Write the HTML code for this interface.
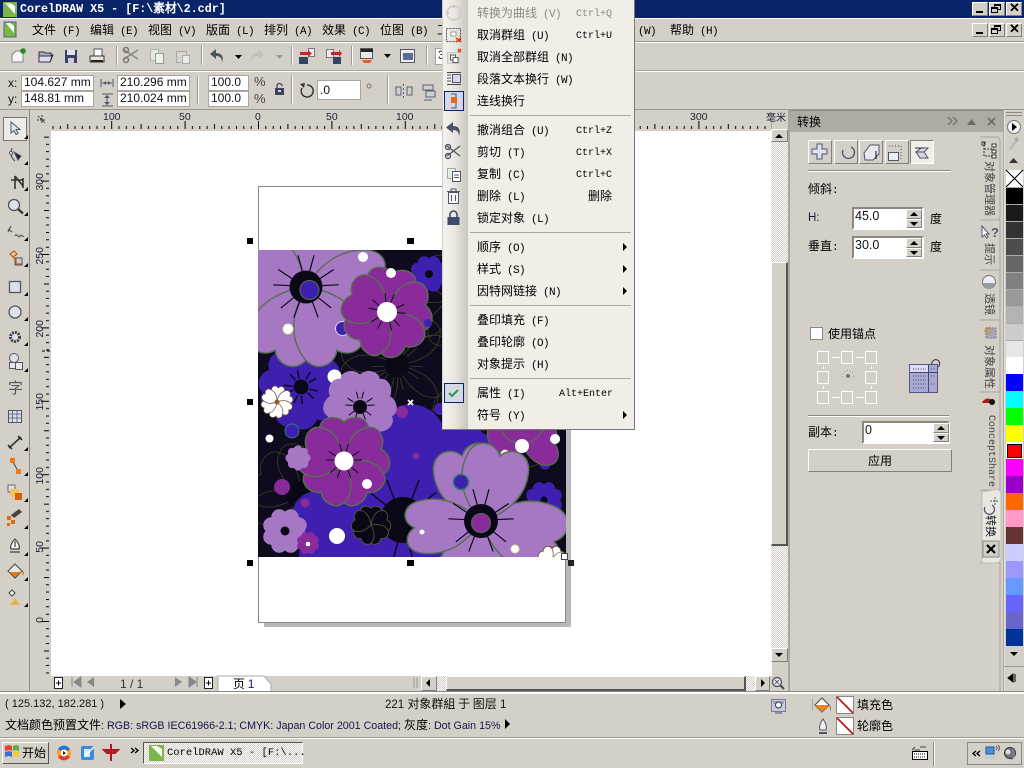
<!DOCTYPE html>
<html lang="zh"><head><meta charset="utf-8"><title>CorelDRAW X5</title>
<style>
html,body{margin:0;padding:0;width:1024px;height:768px;overflow:hidden;background:#d4d0c8}
#r{position:relative;width:1024px;height:768px;overflow:hidden;background:#d4d0c8}
.t{position:absolute;white-space:nowrap;font:12px/14px "WenQuanYi Zen Hei","Noto Sans CJK SC",sans-serif;color:#000}
.a{font:11px/14px "Liberation Mono",monospace;letter-spacing:-.6px}
.s{font:11px/14px "Liberation Sans",sans-serif;color:#111}
.n{color:#15154a;font-size:10.7px}
.b{position:absolute;background:#d4d0c8;border:1px solid;border-color:#fff #808080 #808080 #fff;box-sizing:border-box}
.d{position:absolute}
.i{position:absolute;background:#fff;border:1px solid #a8a59e;box-sizing:border-box;font:12px/13px "Liberation Sans",sans-serif;padding-left:2px;white-space:nowrap;color:#111}
.h{position:absolute;background:repeating-conic-gradient(#fff 0 25%,#cfcbc3 0 50%) 0 0/2px 2px}
.v{position:absolute;writing-mode:vertical-rl;text-orientation:sideways;white-space:nowrap;font:11px/14px "WenQuanYi Zen Hei","Noto Sans CJK SC",sans-serif;color:#444}
svg{position:absolute;left:0;top:0}
#m{position:absolute;left:442px;top:0;width:193px;height:430px;background:#f1eee8;border-right:1px solid #777;border-bottom:1px solid #777;border-left:1px solid #d4d0c8;box-sizing:border-box;overflow:hidden}
#m .c{position:absolute;left:1px;top:0;width:24px;height:430px;background:linear-gradient(90deg,#f4f2ee,#e8e6e1 45%,#c8c5bd)}
#m .t{left:34px}
#m .k{position:absolute;font:10px/14px "Liberation Mono",monospace;color:#000;left:133px;margin-top:2px}
#m .l{position:absolute;left:27px;width:161px;height:1px;background:#aaa8a2}
#m .r{position:absolute;left:180px;width:0;height:0;border-left:4px solid #000;border-top:4px solid transparent;border-bottom:4px solid transparent}
#m .g{color:#8b8984}
</style></head><body><div id="r">

<div class="d" style="left:0;top:0;width:1024px;height:18px;background:#0a246a"></div>
<div class="d" style="left:0;top:18px;width:1024px;height:1px;background:#fff"></div>
<div class="d" style="left:0;top:41px;width:1024px;height:1px;background:#9b9891"></div>
<div class="d" style="left:0;top:42px;width:1024px;height:1px;background:#fff"></div>
<div class="d" style="left:0;top:70px;width:1024px;height:1px;background:#aaa7a0"></div>
<div class="d" style="left:0;top:71px;width:1024px;height:1px;background:#fff"></div>
<div class="d" style="left:0;top:109px;width:1024px;height:1px;background:#9b9891"></div>
<div class="d" style="left:51px;top:131px;width:721px;height:545px;background:#fff"></div>
<div class="d" style="left:29px;top:110px;width:1px;height:582px;background:#888"></div>
<div class="d" style="left:3px;top:117px;width:24px;height:24px;box-sizing:border-box;border:1px solid #777;background:#eeece6"></div>

<div class="d" style="left:790px;top:110px;width:214px;height:22px;background:#aeaba4;border-top:1px solid #8d8a84;box-sizing:border-box"></div>
<div class="d" style="left:788px;top:110px;width:2px;height:582px;background:#aaa7a0"></div>
<div class="d" style="left:1003px;top:110px;width:2px;height:582px;background:linear-gradient(90deg,#8f8c85,#fff)"></div>

<div class="b" style="left:2px;top:742px;width:47px;height:22px;border-color:#fff #555 #555 #fff"></div>
<div class="b" style="left:143px;top:742px;width:160px;height:22px;background:repeating-conic-gradient(#fff 0 25%,#d4d0c8 0 50%) 0 0/2px 2px;border-color:#555 #fff #fff #555"></div>

<svg width="1024" height="768" viewBox="0 0 1024 768">
<defs>
<pattern id="rt" x="258" y="110" width="73.4" height="21" patternUnits="userSpaceOnUse">
<path d="M0.5,11V19M7.8,16V19M15.2,16V19M22.5,16V19M29.9,14V19M37.2,16V19M44.5,16V19M51.9,16V19M59.2,16V19M66.6,16V19" stroke="#000"/></pattern>
<pattern id="rl" x="30" y="621" width="21" height="73.4" patternUnits="userSpaceOnUse">
<path d="M11,.5H19M16,7.8H19M16,15.2H19M16,22.5H19M14,29.9H19M16,37.2H19M16,44.5H19M16,51.9H19M16,59.2H19M16,66.6H19" stroke="#000"/></pattern>
<path id="p" vector-effect="non-scaling-stroke" d="M0,0C-.3,-.15 -.64,-.42 -.55,-.78C-.5,-1.02 -.15,-1.05 0,-.88C.15,-1.05 .5,-1.02 .55,-.78C.64,-.42 .3,-.15 0,0Z"/>
<g id="f5"><use href="#p"/><use href="#p" transform="rotate(72)"/><use href="#p" transform="rotate(144)"/><use href="#p" transform="rotate(216)"/><use href="#p" transform="rotate(288)"/></g>
<g id="f8"><use href="#p"/><use href="#p" transform="rotate(45)"/><use href="#p" transform="rotate(90)"/><use href="#p" transform="rotate(135)"/><use href="#p" transform="rotate(180)"/><use href="#p" transform="rotate(225)"/><use href="#p" transform="rotate(270)"/><use href="#p" transform="rotate(315)"/></g>
<path id="w1" vector-effect="non-scaling-stroke" d="M.17,-.4L.32,-.8M-.17,-.4L-.32,-.8"/>
<g id="w"><use href="#w1"/><use href="#w1" transform="rotate(72)"/><use href="#w1" transform="rotate(144)"/><use href="#w1" transform="rotate(216)"/><use href="#w1" transform="rotate(288)"/></g>
<clipPath id="ic"><rect x="258" y="250" width="308" height="307"/></clipPath>
</defs>

<!-- rulers -->
<rect x="51" y="110" width="721" height="21" fill="url(#rt)"/>
<rect x="30" y="132" width="21" height="544" fill="url(#rl)"/>
<path d="M42,351H50" stroke="#000" stroke-dasharray="3 2"/>
<path d="M38,116l7,7M42,115v9M37,120h9" stroke="#333" stroke-dasharray="2 1"/>

<!-- page -->
<rect x="264" y="192" width="307" height="435" fill="#b9b9b9"/>
<rect x="258.5" y="186.5" width="307" height="436" fill="#fff" stroke="#888"/>

<!-- artwork -->
<g clip-path="url(#ic)">
<rect x="258" y="250" width="308" height="307" fill="#0d0b1d"/>
<g fill="none" stroke="#3d4123" stroke-width=".8">
<use href="#f5" transform="translate(397,365) rotate(20) scale(55)"/>
<use href="#f5" transform="translate(300,495) rotate(10) scale(50)"/>
<use href="#f5" transform="translate(490,430) rotate(-10) scale(60)"/>
<use href="#f5" transform="translate(450,300) rotate(30) scale(45)"/>
<use href="#w" transform="translate(397,365) scale(30)"/>
</g>
<circle cx="397" cy="365" r="12" fill="#0a0816"/>
<circle cx="300" cy="495" r="14" fill="#0a0816"/>

<!-- small blue top left -->
<g fill="#3f1fb0"><use href="#f8" transform="translate(275,270) scale(17)"/><use href="#f8" transform="translate(429,274) scale(18)"/></g>
<circle cx="275" cy="270" r="3.5" fill="#0a0816"/><circle cx="429" cy="274" r="4" fill="#0a0816"/>

<!-- big blue under -->
<g fill="#3f1fb0">
<use href="#p" transform="translate(403,520) rotate(-100) scale(80,110)"/>
<use href="#p" transform="translate(403,525) rotate(-12) scale(65,105)"/>
<use href="#p" transform="translate(405,525) rotate(22) scale(105,118)"/>
<use href="#p" transform="translate(403,520) rotate(-150) scale(85,80)"/>
<use href="#p" transform="translate(403,520) rotate(170) scale(105,90)"/>
<use href="#f5" transform="translate(301,387) rotate(10) scale(41)"/>
</g>
<g stroke="#0a0816" stroke-width="1.4" fill="none"><use href="#w" transform="translate(403,520) scale(50)"/><use href="#w" transform="translate(301,387) rotate(10) scale(20)"/></g>
<circle cx="301" cy="387" r="7.5" fill="#0a0816"/>
<circle cx="403" cy="520" r="23" fill="#0a0816"/>

<!-- flower A -->
<g fill="#a678c4" stroke="#56704f" stroke-width="1.4">
<use href="#p" transform="translate(306,287) rotate(5) scale(110,85)"/>
<use href="#p" transform="translate(306,287) rotate(-75) scale(75,70)"/>
<use href="#p" transform="translate(306,287) rotate(84) scale(55,82)"/>
<use href="#p" transform="translate(306,287) rotate(206) scale(60,80)"/>
<use href="#p" transform="translate(306,287) rotate(154) scale(60,80)"/>
</g>
<g stroke="#0a0816" stroke-width="1.2"><use href="#w" transform="translate(306,287) rotate(36) scale(38)"/></g>
<circle cx="306" cy="287" r="16.5" fill="#0a0816"/>
<circle cx="309.5" cy="290" r="9.5" fill="#3f1fb0" stroke="#56704f"/>
<circle cx="342.5" cy="328.5" r="7" fill="#3f1fb0" stroke="#e0d8ee"/>
<circle cx="288" cy="329" r="5" fill="#fff" stroke="#e8e4a8"/>

<!-- flower purple top -->
<g fill="#8a2b9b" stroke="#56704f" stroke-width="1.4"><use href="#f5" transform="translate(387,312) rotate(8) scale(44)"/></g>
<g stroke="#0a0816"><use href="#w" transform="translate(387,312) rotate(44) scale(22)"/></g>
<circle cx="387" cy="312" r="10" fill="#fff"/>

<!-- dots -->
<g fill="#fff"><circle cx="363" cy="257" r="5"/><circle cx="391" cy="273" r="5"/><circle cx="334.5" cy="376.5" r="7"/><circle cx="269.5" cy="438.5" r="4"/><circle cx="337" cy="536" r="8"/><circle cx="367" cy="484" r="5"/><circle cx="422" cy="532" r="2.5"/><circle cx="515" cy="549" r="4" stroke="#e8e4a8"/><circle cx="555" cy="439" r="5"/><circle cx="505" cy="454" r="4" stroke="#e8e4a8"/></g>
<circle cx="428" cy="323" r="4" fill="#3f1fb0"/>
<circle cx="292" cy="431" r="7" fill="#3f1fb0" stroke="#2b7a78"/>
<circle cx="282" cy="487" r="8" fill="#8a2b9b"/>
<circle cx="305" cy="503" r="4.5" fill="#8a2b9b"/>
<circle cx="402" cy="412" r="6" fill="#8a2b9b"/>
<circle cx="416" cy="456" r="3.5" fill="#8a2b9b"/>
<circle cx="545" cy="464" r="5.5" fill="#3f1fb0"/>
<circle cx="440" cy="409" r="6" fill="#3f1fb0"/>

<!-- light purple mid -->
<g fill="#a678c4" stroke="#a678c4"><use href="#f5" transform="translate(360,406) rotate(0) scale(35)"/></g>
<g stroke="#0a0816"><use href="#w" transform="translate(360,406) rotate(36) scale(17)"/></g>
<circle cx="360" cy="407" r="7" fill="#0a0816"/>

<!-- white flower -->
<g fill="#fff" stroke="#6b5030" stroke-width=".7"><use href="#p" transform="translate(277,402) rotate(5) scale(12,16)"/><use href="#p" transform="translate(277,402) rotate(65) scale(12,16)"/><use href="#p" transform="translate(277,402) rotate(125) scale(12,16)"/><use href="#p" transform="translate(277,402) rotate(185) scale(12,16)"/><use href="#p" transform="translate(277,402) rotate(245) scale(12,16)"/><use href="#p" transform="translate(277,402) rotate(305) scale(12,16)"/></g>
<circle cx="277" cy="402" r="2.5" fill="#8a5a30"/>

<!-- purple middle -->
<g fill="#8a2b9b" stroke="#56704f" stroke-width="1.4"><use href="#f5" transform="translate(344,461) rotate(0) scale(44)"/></g>
<g stroke="#0a0816"><use href="#w" transform="translate(344,461) rotate(36) scale(21)"/></g>
<circle cx="344" cy="461" r="9.5" fill="#fff"/>
<circle cx="367" cy="484" r="5" fill="#fff"/>

<g fill="#a678c4"><use href="#f8" transform="translate(298,458) rotate(22) scale(12)"/><use href="#f8" transform="translate(285,531) scale(22)"/></g>
<circle cx="285" cy="531" r="4.5" fill="#0a0816"/>
<g fill="#8a2b9b"><use href="#f8" transform="translate(308,543) scale(11)"/></g>
<circle cx="308" cy="544" r="2.3" fill="#fff"/>
<g fill="#0a0816" stroke="#5b6030" stroke-width=".8"><use href="#f5" transform="translate(371,525) scale(19)"/></g>

<!-- purple top right -->
<g fill="#8a2b9b" stroke="#56704f" stroke-width="1.2"><use href="#p" transform="translate(522,446) rotate(85) scale(38,36)"/><use href="#p" transform="translate(522,446) rotate(-85) scale(38,36)"/><use href="#p" transform="translate(522,446) rotate(0) scale(38,30)"/></g>
<circle cx="522" cy="446" r="7" fill="#fff"/>
<circle cx="505" cy="454" r="4" fill="#fff" stroke="#e8e4a8"/>
<circle cx="555" cy="439" r="5" fill="#fff"/>

<g fill="#3f1fb0"><use href="#f8" transform="translate(544,500) scale(18)"/></g>
<circle cx="544" cy="500" r="3.5" fill="#0a0816"/>

<!-- big light flower -->
<g fill="#a678c4" stroke="#56704f" stroke-width="1.5">
<use href="#p" transform="translate(481,522) rotate(172) scale(85,62)"/>
<use href="#p" transform="translate(481,522) rotate(105) scale(62,86)"/>
<use href="#p" transform="translate(481,522) rotate(-16) scale(58,78)"/>
<use href="#p" transform="translate(481,522) rotate(16) scale(58,78)"/>
<use href="#p" transform="translate(481,522) rotate(-95) scale(48,76)"/>
</g>
<g stroke="#0a0816" stroke-width="1.2"><use href="#w" transform="translate(481,521) rotate(36) scale(38)"/></g>
<circle cx="481" cy="521" r="17" fill="#0a0816"/>
<circle cx="481" cy="523" r="9.5" fill="#8a2b9b" stroke="#56704f"/>
<circle cx="461" cy="482" r="7.5" fill="#3f1fb0" stroke="#2b7a78" stroke-width="1.5"/>
<circle cx="422" cy="532" r="2.5" fill="#fff"/>
<circle cx="515" cy="549" r="4" fill="#fff" stroke="#e8e4a8"/>
<g fill="#fff" stroke="#6b5030" stroke-width=".7"><use href="#f8" transform="translate(552,560) scale(14)"/></g>
</g>
<path d="M408,400l5,5M413,400l-5,5" stroke="#fff" stroke-width="1.8"/>
<rect x="561.5" y="553.5" width="6" height="6" fill="#fff" stroke="#444"/>
<g fill="#000"><rect x="247" y="238" width="6" height="6"/><rect x="407" y="238" width="7" height="6"/><rect x="247" y="399" width="6" height="6"/><rect x="247" y="560" width="6" height="6"/><rect x="407" y="560" width="7" height="6"/><rect x="568" y="560" width="6" height="6" fill="#222"/></g>

<!-- title icon -->
<rect x="3" y="2" width="14" height="15" fill="#7ab648"/><path d="M5,3L15,14L15,6L10,3Z" fill="#fff"/><path d="M6,3l4,0-2,4z" fill="#d8e8c0"/>
<!-- menu icon -->
<rect x="4" y="22" width="12" height="15" fill="#7ab648" stroke="#567"/><path d="M6,23l8,10v-7l-4,-3z" fill="#fff"/>

<!-- toolbar icons -->
<g stroke-width="1">
<path d="M13,54l3,-3h7v11h-11v-8z" fill="#f5f5f5" stroke="#888"/><circle cx="23" cy="51" r="2.8" fill="#2c8a2c"/>
<path d="M39,52h5l1,1h6v2h2l-3,7h-11z" fill="#aab0bd" stroke="#334"/><path d="M39,56h13l-2,6h-11z" fill="#dde" stroke="#334"/>
<rect x="65" y="50" width="12" height="13" fill="#374366"/><rect x="67" y="50" width="8" height="5" fill="#dfe3ea"/><rect x="68" y="58" width="6" height="5" fill="#ccd"/>
<path d="M94,49h8v7h-8z" fill="#fff" stroke="#555"/><path d="M90,56h14v6h-14z" fill="#e9e6d6" stroke="#333"/><rect x="91" y="60" width="12" height="2" fill="#222"/>
<rect x="116" y="46" width="1" height="19" fill="#999"/><rect x="117" y="46" width="1" height="19" fill="#fff"/>
<path d="M124,50l14,9M138,50l-14,9" stroke="#8a8780" stroke-width="1.5"/><circle cx="126" cy="60" r="2.5" fill="none" stroke="#777" stroke-width="1.5"/><circle cx="126" cy="50" r="2.5" fill="none" stroke="#777" stroke-width="1.5"/>
<rect x="150.5" y="49.5" width="8" height="11" fill="#e6e6e0" stroke="#a5b8b0"/><rect x="155.5" y="53.5" width="8" height="10" fill="#f0f0ea" stroke="#999"/>
<rect x="176.5" y="51.5" width="10" height="11" fill="#d8d5ce" stroke="#aaa"/><rect x="182.5" y="55.5" width="7" height="8" fill="#ecece6" stroke="#aaa"/>
<rect x="201" y="46" width="1" height="19" fill="#999"/><rect x="202" y="46" width="1" height="19" fill="#fff"/>
<path d="M216,49l-6,5l6,5v-3c4,0 6,2 6,7c2,-6 0,-10 -6,-10z" fill="#4d5260"/>
<path d="M235,55h7l-3.5,4z" fill="#000"/>
<path d="M258,49l6,5l-6,5v-3c-4,0 -6,2 -6,7c-2,-6 0,-10 6,-10z" fill="#c2c0ba"/>
<path d="M276,55h7l-3.5,4z" fill="#999"/>
<rect x="291" y="46" width="1" height="19" fill="#999"/><rect x="292" y="46" width="1" height="19" fill="#fff"/>
<rect x="308.5" y="48.5" width="6" height="8" fill="#eee" stroke="#778"/><path d="M300,52h8v-2l4,3.5l-4,3.5v-2h-8z" fill="#c22"/><rect x="299" y="57" width="9" height="7" fill="#334466"/>
<rect x="326.5" y="49.5" width="7" height="8" fill="#eee" stroke="#778"/><path d="M331,52h8v-2l3,3.5l-3,3.5v-2h-8z" fill="#c22"/><rect x="333" y="57" width="8" height="7" fill="#334466"/>
<rect x="351" y="46" width="1" height="19" fill="#999"/><rect x="352" y="46" width="1" height="19" fill="#fff"/>
<rect x="360.5" y="48.5" width="12" height="10" fill="#e8e8e8" stroke="#556"/><rect x="361" y="49" width="12" height="3" fill="#222"/><path d="M362,60h10l-2,3h-6z" fill="#e85a20"/>
<path d="M384,54h7l-3.5,4z" fill="#000"/>
<rect x="400.5" y="49.5" width="14" height="13" fill="#eee" stroke="#556"/><rect x="403" y="53" width="10" height="7" fill="#5a6a9a"/>
<rect x="426" y="46" width="1" height="19" fill="#999"/><rect x="427" y="46" width="1" height="19" fill="#fff"/>
</g>

<!-- property bar glyphs -->
<rect x="197" y="76" width="1" height="28" fill="#999"/><rect x="198" y="76" width="1" height="28" fill="#fff"/>
<rect x="291" y="76" width="1" height="28" fill="#999"/><rect x="292" y="76" width="1" height="28" fill="#fff"/>
<rect x="387" y="76" width="1" height="28" fill="#999"/><rect x="388" y="76" width="1" height="28" fill="#fff"/>
<path d="M101,79v8M113,79v8M102,83h10" stroke="#556" fill="none"/><path d="M103,83l3,-2v4zM111,83l-3,-2v4z" fill="#556"/>
<path d="M102,94h11M102,106h11M107,95v10" stroke="#556"/><path d="M107,95l-3,3h6zM107,105l-3,-3h6z" fill="#556"/>
<path d="M275,88h9v7h-9z" fill="#3d4460"/><path d="M277,88v-2a2.5,2.5 0 0 1 5,0" stroke="#3d4460" fill="none" stroke-width="1.3"/><rect x="278" y="90" width="3" height="2" fill="#d4d0c8"/>
<path d="M307,85a6,6 0 1 1 -5,3" stroke="#333" fill="none" stroke-width="1.4"/><path d="M300,84l5,-1l-1,5z" fill="#333"/>
<circle cx="369" cy="86" r="2" fill="none" stroke="#777"/>
<g fill="none" stroke="#55607a"><path d="M396,87h5v8h-5zM407,87h5v8h-5z"/><path d="M403.5,84v16" stroke-dasharray="2 2"/></g>
<g fill="none" stroke="#55607a"><path d="M423,85h10v5h-10zM426,91h9v6h-9zM424,100h8" /></g>

<!-- toolbox icons -->
<path d="M11,122v11l3,-2.5l2,4l2,-1l-2,-4h4z" fill="#e8e8ee" stroke="#50566a"/>
<g fill="none" stroke="#50566a">
<path d="M12,148c-2,5 -1,10 3,13" stroke-width="1.2"/><circle cx="11" cy="153" r="1.5" fill="#fff"/><path d="M14,152l7,4l-3,4z" fill="#222"/>
<path d="M11,180h12M15,176v13M15,176l8,10M23,178v10" stroke="#333" stroke-width="1.6"/>
<circle cx="14" cy="205" r="5.5" fill="#dfe2ee" stroke="#555" stroke-width="1.3"/><path d="M18,209l5,4.5" stroke="#333" stroke-width="2.2"/>
<path d="M8,229l4,3M11,226l-3,6M15,236c2,-4 3,3 5,0c1,-3 2,2 4,0" stroke="#556" stroke-width="1.2"/>
<rect x="15" y="258" width="7" height="7" fill="#c9cdd9"/><path d="M10,254l4,-3l3,3l-4,3zM13,258h3v6h6" stroke="#c65a10" stroke-width="1.2"/>
<rect x="9.5" y="281.5" width="11" height="11" fill="#dfe1ea" stroke="#50566a" stroke-width="1.3"/>
<circle cx="15" cy="312" r="6" fill="#dfe1ea" stroke="#50566a" stroke-width="1.3"/>
<circle cx="15" cy="337" r="4.5" fill="#dfe1ea" stroke="#444" stroke-width="3" stroke-dasharray="2 1"/>
<circle cx="14" cy="358" r="4.5" fill="#dfe1ea" stroke="#556"/><rect x="9.5" y="362.5" width="7" height="6" fill="#e5e5ea" stroke="#556"/><rect x="15.5" y="362.5" width="7" height="7" fill="#e5e5ea" stroke="#556"/>
<rect x="8.5" y="410.5" width="13" height="12" fill="#dde" stroke="#50566a"/><path d="M9,414h12M9,418h12M12.5,411v11M17,411v11" stroke="#50566a" stroke-width=".8"/>
<path d="M9,448l12,-11" stroke="#333" stroke-width="1.6"/><path d="M8,445l4,4M18,436l4,4" stroke="#222" stroke-width="1.5"/>
<path d="M13,462l5,9" stroke="#444"/>
<path d="M15,539c-4,4 -5,7 -4,10h8c1,-3 0,-6 -4,-10zM15,541v6M10,552h10" stroke="#444" stroke-width="1.2" fill="#f2f2f4"/>
</g>
<rect x="10" y="458" width="5" height="5" fill="#ed7a1a"/><rect x="16" y="469" width="5" height="5" fill="#ed7a1a"/>
<rect x="8" y="485" width="7" height="7" fill="#d9dde5" stroke="#555" stroke-width=".8"/><rect x="11" y="489" width="8" height="8" fill="#f6c550"/><rect x="15" y="493" width="7" height="7" fill="#e05a00"/>
<path d="M11,515l8,-6l3,3l-8,6z" fill="#444"/><rect x="7" y="516" width="4" height="4" fill="#e36a10"/><rect x="11" y="520" width="4" height="4" fill="#e36a10"/><rect x="7" y="523" width="3" height="3" fill="#e36a10"/>
<path d="M15,564l-7,7l7,7l7,-7z" fill="#e8e8ee" stroke="#444"/><path d="M9,572h12l-6,5z" fill="#e27c16"/><path d="M21,570q3,1 2,5" stroke="#c66a10" fill="none"/>
<path d="M12,590l3,3l-3,3l-3,-3z" fill="#dfe" stroke="#444"/><path d="M15,598l5,7h-10z" fill="#e9b04a"/>
<text x="8" y="393" style="font:15px 'WenQuanYi Zen Hei','Noto Sans CJK SC',sans-serif" fill="#55575f">字</text>
<g fill="#000"><path d="M24,139h4v-4zM24,165h4v-4zM24,191h4v-4zM24,216h4v-4zM24,241h4v-4zM24,267h4v-4zM24,296h4v-4zM24,321h4v-4zM24,346h4v-4zM24,372h4v-4zM24,451h4v-4zM24,476h4v-4zM24,502h4v-4zM24,529h4v-4zM24,556h4v-4zM24,581h4v-4zM24,607h4v-4z"/></g>

<!-- bottom nav -->
<rect x="54.5" y="677.5" width="8" height="11" fill="#fff" stroke="#222"/><path d="M56,683h5M58.5,680.5v5" stroke="#000"/>
<path d="M72,677v10M81,677v10l-7,-5z" stroke="#888" fill="#888"/><path d="M94,677v10l-7,-5z" fill="#888"/>
<path d="M175,677v10l7,-5z" fill="#888"/><path d="M189,677v10l7,-5z M197,677v10" fill="#888" stroke="#888"/>
<rect x="204.5" y="677.5" width="8" height="11" fill="#fff" stroke="#222"/><path d="M206,683h5M208.5,680.5v5" stroke="#000"/>
<path d="M218,691V676h46l7,8v7" fill="#fff" stroke="#aaa"/>
<path d="M414,678v10M417,678v10" stroke="#999"/>
<circle cx="777" cy="682" r="4.5" fill="#eee" stroke="#556" stroke-width="1.4"/><path d="M775,680l4,4M779,680l-4,4" stroke="#667" stroke-width="1.2"/><path d="M780,685l4,4" stroke="#445" stroke-width="2"/>

<!-- docker -->
<path d="M948,117l4,4l-4,4M953,117l4,4l-4,4" stroke="#7a7872" fill="none" stroke-width="1.5"/>
<path d="M967,125h9l-4.5,-6z" fill="#6d6b66"/>
<path d="M988,118l7,7M995,118l-7,7" stroke="#6d6b66" stroke-width="1.7"/>
<path d="M808,171.5h143" stroke="#fff"/><path d="M808,170.5h143" stroke="#888"/>
<path d="M808,416.5h141" stroke="#fff"/><path d="M808,415.5h141" stroke="#888"/>

<rect x="911" y="141" width="22" height="22" fill="#f0eee8"/>
<g fill="none" stroke="#50566a">
<path d="M816,146h5v5h5v5h-5v5h-5v-5h-5v-5h5z" fill="#dfe2ee" transform="translate(1,-2)"/>
<path d="M851,147a6,6 0 1 1 -8,3" stroke-width="1.3"/>
<path d="M864,153l6,-8h9v9l-6,6h-8z" fill="#e8e8f0"/><path d="M876,151v8" stroke="#111"/>
<rect x="888.5" y="152.5" width="10" height="8" fill="#eee"/><path d="M889,146h12v14" stroke-dasharray="1 2"/>
<path d="M916,152l5,-4h7l-4,4zM916,152h8l4,6h-8z" fill="#d8d8e4"/><path d="M915,148h9" stroke="#222"/>
</g>

<!-- anchor grid -->
<g fill="none" stroke="#fff"><rect x="817.5" y="351.5" width="11" height="12"/><rect x="841.5" y="351.5" width="11" height="12"/><rect x="865.5" y="351.5" width="11" height="12"/><rect x="817.5" y="371.5" width="11" height="12"/><rect x="865.5" y="371.5" width="11" height="12"/><rect x="817.5" y="391.5" width="11" height="12"/><rect x="841.5" y="391.5" width="11" height="12"/><rect x="865.5" y="391.5" width="11" height="12"/><path d="M832,357.5h8M856,357.5h8M832,397.5h8M856,397.5h8M823.5,366v3M871.5,366v3M823.5,386v3M871.5,386v3"/><circle cx="848" cy="376" r="5.5" stroke="#fff"/></g>
<circle cx="848" cy="376" r="5.5" fill="none" stroke="#999" stroke-dasharray="2 1"/><circle cx="848" cy="376" r="2" fill="#777"/>
<rect x="909.5" y="364.5" width="28" height="28" fill="#a9a9d2" stroke="#55558a"/><rect x="910" y="365" width="19" height="7" fill="#ddddf0"/><path d="M928.5,365v28M910,372.5h28" stroke="#44447a"/><path d="M913,369h13M913,376h13M913,380h13M913,384h13M913,388h13M931,369h5M931,376h5M931,384h5" stroke="#44447a" stroke-dasharray="1 1.5"/>
<path d="M932,365a4,4 0 1 1 6,2" stroke="#333" fill="none"/>

<!-- tab strip -->
<g fill="#d4d0c8" stroke="#a8a59e"><path d="M980,137l12,0h6l2,3v77l-2,3l-18,0"/><path d="M980,220h20v50h-20"/><path d="M980,270h20v50h-20"/><path d="M980,320h20v72h-20"/><path d="M980,392h20v98h-20"/><path d="M980,563h20v129h-20" /></g>
<path d="M982,492l16,-3l3,3v68l-3,3h-16z" fill="#e9e7e1" stroke="#bbb"/>
<rect x="983" y="541" width="16" height="16" fill="#d4d0c8" stroke="#888"/><path d="M987,545l8,8M995,545l-8,8" stroke="#000" stroke-width="2.2"/>
<rect x="982" y="142" width="3" height="3" fill="#fff" stroke="#333"/><path d="M984,142v14h10M984,149h10" stroke="#333" fill="none" stroke-dasharray="2 1"/><rect x="992" y="144" width="4" height="3" fill="#fff" stroke="#333"/><rect x="992" y="150" width="4" height="3" fill="#fff" stroke="#333"/><rect x="992" y="155" width="4" height="3" fill="#fff" stroke="#333"/>
<path d="M982,226v11l2.5,-2l2,3l1.5,-1l-2,-3h3z" fill="#fff" stroke="#556"/>
<text x="991" y="237" style="font:bold 13px 'Liberation Sans',sans-serif" fill="#556">?</text>
<circle cx="989" cy="282" r="6.5" fill="#ececf2" stroke="#777"/><path d="M983,283a6,6 0 0 0 12,0z" fill="#9a9aa6"/>
<path d="M983,331l6,-5l7,5l-7,6z" fill="#e8b040"/><rect x="986" y="328" width="10" height="10" fill="#9a9aba" opacity=".7" stroke="#556" stroke-dasharray="2 1"/>
<path d="M982,403c2,-5 8,-6 10,-2l-3,2l-4,0z" fill="#b01818"/><circle cx="992" cy="402" r="3" fill="#111"/>
<path d="M985,507a5,5 0 1 0 7,-2" stroke="#556" fill="none" stroke-width="1.3"/><path d="M995,497v9M990,501h9" stroke="#556" stroke-dasharray="2 1"/>

<!-- palette -->
<rect x="1006" y="112" width="16" height="1" fill="#888"/><rect x="1006" y="115" width="16" height="1" fill="#888"/>
<circle cx="1014" cy="127" r="6.5" fill="#f4f4f4" stroke="#777"/><path d="M1012,123l5,4l-5,4z" fill="#000"/>
<path d="M1009,148l6,-8l2,2l-6,8z" fill="#bbb"/><path d="M1014,139l3,-2l2,3l-2,2z" fill="#aaa"/>
<path d="M1009,163h9l-4.5,-5z" fill="#333"/>
<g shape-rendering="crispEdges">
<rect x="1006" y="170" width="17" height="17" fill="#fff"/><path d="M1006,170l17,17M1023,170l-17,17" stroke="#000"/>
<rect x="1006" y="187" width="17" height="17" fill="#000"/><rect x="1006" y="204" width="17" height="17" fill="#1a1a1a"/><rect x="1006" y="221" width="17" height="17" fill="#333"/><rect x="1006" y="238" width="17" height="17" fill="#4d4d4d"/><rect x="1006" y="255" width="17" height="17" fill="#666"/><rect x="1006" y="272" width="17" height="17" fill="#808080"/><rect x="1006" y="289" width="17" height="17" fill="#999"/><rect x="1006" y="306" width="17" height="17" fill="#b3b3b3"/><rect x="1006" y="323" width="17" height="17" fill="#ccc"/><rect x="1006" y="340" width="17" height="17" fill="#e6e6e6"/><rect x="1006" y="357" width="17" height="17" fill="#fff"/><rect x="1006" y="374" width="17" height="17" fill="#00f"/><rect x="1006" y="391" width="17" height="17" fill="#0ff"/><rect x="1006" y="408" width="17" height="17" fill="#0f0"/><rect x="1006" y="425" width="17" height="17" fill="#ff0"/><rect x="1006" y="442" width="17" height="17" fill="#fff"/><rect x="1007.5" y="444.5" width="14" height="13" fill="#f00" stroke="#000"/><rect x="1006" y="459" width="17" height="17" fill="#f0f"/><rect x="1006" y="476" width="17" height="17" fill="#90c"/><rect x="1006" y="493" width="17" height="17" fill="#f60"/><rect x="1006" y="510" width="17" height="17" fill="#f9c"/><rect x="1006" y="527" width="17" height="17" fill="#633"/><rect x="1006" y="544" width="17" height="17" fill="#ccf"/><rect x="1006" y="561" width="17" height="17" fill="#99f"/><rect x="1006" y="578" width="17" height="17" fill="#69f"/><rect x="1006" y="595" width="17" height="17" fill="#66f"/><rect x="1006" y="612" width="17" height="17" fill="#66c"/><rect x="1006" y="629" width="17" height="17" fill="#039"/>
<g stroke="#aaa" fill="none"><path d="M1006,187.5h17M1006,204.5h17M1006,221.5h17M1006,238.5h17M1006,255.5h17M1006,272.5h17M1006,289.5h17M1006,306.5h17M1006,323.5h17M1006,340.5h17"/></g>
</g>
<path d="M1010,652h8l-4,4z" fill="#000"/>
<path d="M1013,674l-5,4l5,4zM1015,674v8" fill="#000" stroke="#000"/>
<rect x="1004" y="666" width="20" height="1" fill="#999"/>

<!-- status -->
<rect x="0" y="691" width="1024" height="1" fill="#8b8982"/><rect x="0" y="692" width="1024" height="2" fill="#fff"/>
<rect x="0" y="737" width="1024" height="1" fill="#9c9a93"/><rect x="0" y="738" width="1024" height="1" fill="#fff"/>
<path d="M120,699v10l6,-5z" fill="#000"/>
<path d="M505,719v10l5,-5z" fill="#000"/>
<rect x="771.5" y="699.5" width="14" height="12" fill="#c6c8dd" stroke="#7a7a9a"/><rect x="773" y="701" width="11" height="3" fill="#a0a0c0"/><circle cx="778.5" cy="705" r="3" fill="#fff" stroke="#333"/><rect x="775" y="712" width="7" height="2" fill="#9090b0"/>
<rect x="812" y="699" width="1" height="12" fill="#aaa"/>
<path d="M822,698l-7,7l7,7l7,-7z" fill="#fff" stroke="#444"/><path d="M815,705h14l-7,7z" fill="#e88a1c"/><path d="M829,705q2,2 1.5,5" stroke="#c66a10" fill="none"/>
<path d="M823,719c-3,4 -4,8 -3,11h6c1,-3 0,-7 -3,-11z" fill="#eee" stroke="#555"/><rect x="819" y="732" width="8" height="2" fill="#556"/>
<rect x="836.5" y="696.5" width="17" height="17" fill="#fff" stroke="#888"/><path d="M837,697l16,16" stroke="#c01818" stroke-width="1.8"/>
<rect x="836.5" y="717.5" width="17" height="17" fill="#fff" stroke="#888"/><path d="M837,718l16,16" stroke="#c01818" stroke-width="1.8"/>

<!-- taskbar -->
<path d="M5,746l4,-1l3,1v5l-3,-1l-4,1z" fill="#e8432a"/><path d="M13,746l3,-1l3,1v5l-3,-1l-3,1z" fill="#5ab03a"/><path d="M5,752l4,-1l3,1v5l-3,-1l-4,1z" fill="#3c6fd8"/><path d="M13,752l3,-1l3,1v5l-3,-1l-3,1z" fill="#f7ca2c"/>
<circle cx="64" cy="753" r="7" fill="#f4a020"/><path d="M58,749a7,7 0 0 1 12,0l-6,4z" fill="#3070d0"/><path d="M58,757a7,7 0 0 0 12,0l-6,-4z" fill="#e04020"/><circle cx="64" cy="753" r="3.5" fill="#fff"/><path d="M63,751l3,2l-3,2z" fill="#222"/>
<rect x="81" y="746" width="13" height="14" rx="2" fill="#3a8be0"/><path d="M84,749h6v8h-6z" fill="#d8ecff"/><path d="M85,756l9,-9" stroke="#fff" stroke-width="1.4"/>
<path d="M111,744v17M104,750h14l-3,3h-8z" stroke="#b01828" fill="#c81e2e" stroke-width="2"/>
<path d="M131,748l3,2.5l-3,2.5M135,748l3,2.5l-3,2.5" stroke="#000" fill="none" stroke-width="1.3"/>
<rect x="149" y="745" width="15" height="16" fill="#7ab648"/><path d="M151,746l11,11v-8l-5,-3z" fill="#fff"/>
<g fill="none" stroke="#000"><path d="M912,750l3,-3M914,750h6M926,747h-6" stroke="#444"/><rect x="912.5" y="751.5" width="15" height="8" fill="#fff"/><path d="M914,754h12M914,757h12" stroke-dasharray="1 1"/></g>
<rect x="933" y="742" width="1" height="24" fill="#888"/><rect x="934" y="742" width="1" height="24" fill="#fff"/>
<rect x="967.5" y="742.5" width="54" height="22" fill="none" stroke="#888"/>
<path d="M976,751l-3,2.5l3,2.5M980,751l-3,2.5l3,2.5" stroke="#000" fill="none" stroke-width="1.3"/>
<rect x="986" y="747" width="8" height="7" fill="#4a90e2" stroke="#258"/><rect x="986" y="756" width="8" height="3" fill="#bcd"/><path d="M996,746q2,2 0,4M998,745q3,3 0,6" stroke="#557" fill="none"/>
<circle cx="1010" cy="753" r="5.5" fill="#777" stroke="#333"/><circle cx="1008" cy="752" r="2.5" fill="#ddd"/><path d="M1013,749a8,8 0 0 1 -2,11" stroke="#8884c8" fill="none"/>
</svg>

<!-- window buttons -->
<div class="b" style="left:972px;top:2px;width:16px;height:14px"></div><div class="d" style="left:976px;top:11px;width:7px;height:2px;background:#000"></div>
<div class="b" style="left:989px;top:2px;width:16px;height:14px"></div><div class="d" style="left:994px;top:4px;width:7px;height:6px;border:1px solid #000;border-top-width:2px;box-sizing:border-box"></div><div class="d" style="left:991px;top:7px;width:7px;height:6px;border:1px solid #000;border-top-width:2px;box-sizing:border-box;background:#d4d0c8"></div>
<div class="b" style="left:1006px;top:2px;width:16px;height:14px"></div><div class="t" style="left:1009px;top:1px;font:bold 13px/14px 'Liberation Sans',sans-serif">✕</div>
<div class="b" style="left:972px;top:23px;width:16px;height:14px"></div><div class="d" style="left:976px;top:32px;width:7px;height:2px;background:#000"></div>
<div class="b" style="left:989px;top:23px;width:16px;height:14px"></div><div class="d" style="left:994px;top:25px;width:7px;height:6px;border:1px solid #000;border-top-width:2px;box-sizing:border-box"></div><div class="d" style="left:991px;top:28px;width:7px;height:6px;border:1px solid #000;border-top-width:2px;box-sizing:border-box;background:#d4d0c8"></div>
<div class="b" style="left:1006px;top:23px;width:16px;height:14px"></div><div class="t" style="left:1009px;top:22px;font:bold 13px/14px 'Liberation Sans',sans-serif">✕</div>

<div class="t" style="left:20px;top:2px;color:#fff;font:bold 11.7px/14px 'Liberation Mono','WenQuanYi Zen Hei',monospace">CorelDRAW X5 - [F:\素材\2.cdr]</div>

<div class="t" style="left:32px;top:23px">文件<span class="a"> (F)</span></div>
<div class="t" style="left:90px;top:23px">编辑<span class="a"> (E)</span></div>
<div class="t" style="left:148px;top:23px">视图<span class="a"> (V)</span></div>
<div class="t" style="left:206px;top:23px">版面<span class="a"> (L)</span></div>
<div class="t" style="left:264px;top:23px">排列<span class="a"> (A)</span></div>
<div class="t" style="left:322px;top:23px">效果<span class="a"> (C)</span></div>
<div class="t" style="left:380px;top:23px">位图<span class="a"> (B)</span></div>
<div class="t" style="left:437px;top:23px">工具</div>
<div class="t" style="left:638px;top:23px"><span class="a">(W)</span></div>
<div class="t" style="left:670px;top:23px">帮助<span class="a"> (H)</span></div>

<div class="i" style="left:435px;top:48px;width:16px;height:17px">3</div>

<div class="t s" style="left:8px;top:76px;font-size:12px">x:</div>
<div class="t s" style="left:8px;top:92px;font-size:12px">y:</div>
<div class="i" style="left:21px;top:75px;width:73px;height:16px">104.627 mm</div>
<div class="i" style="left:21px;top:91px;width:73px;height:16px">148.81 mm</div>
<div class="i" style="left:117px;top:75px;width:73px;height:16px">210.296 mm</div>
<div class="i" style="left:117px;top:91px;width:73px;height:16px">210.024 mm</div>
<div class="i" style="left:208px;top:75px;width:41px;height:16px">100.0</div>
<div class="i" style="left:208px;top:91px;width:41px;height:16px">100.0</div>
<div class="t s" style="left:254px;top:75px;font-size:13px;color:#444">%</div>
<div class="t s" style="left:254px;top:92px;font-size:13px;color:#444">%</div>
<div class="i" style="left:317px;top:80px;width:44px;height:20px;line-height:18px">.0</div>

<!-- ruler text -->
<div class="t s" style="left:103px;top:110px;font-size:10.5px;color:#223">100</div>
<div class="t s" style="left:179px;top:110px;font-size:10.5px;color:#223">50</div>
<div class="t s" style="left:255px;top:110px;font-size:10.5px;color:#223">0</div>
<div class="t s" style="left:326px;top:110px;font-size:10.5px;color:#223">50</div>
<div class="t s" style="left:396px;top:110px;font-size:10.5px;color:#223">100</div>
<div class="t s" style="left:690px;top:110px;font-size:10.5px;color:#223">300</div>
<div class="t" style="left:766px;top:110px;font-size:10px;color:#223">毫米</div>
<div class="v" style="left:33px;top:173px;transform:rotate(180deg);font:10.5px/14px 'Liberation Sans',sans-serif;color:#223">300</div>
<div class="v" style="left:33px;top:247px;transform:rotate(180deg);font:10.5px/14px 'Liberation Sans',sans-serif;color:#223">250</div>
<div class="v" style="left:33px;top:320px;transform:rotate(180deg);font:10.5px/14px 'Liberation Sans',sans-serif;color:#223">200</div>
<div class="v" style="left:33px;top:393px;transform:rotate(180deg);font:10.5px/14px 'Liberation Sans',sans-serif;color:#223">150</div>
<div class="v" style="left:33px;top:467px;transform:rotate(180deg);font:10.5px/14px 'Liberation Sans',sans-serif;color:#223">100</div>
<div class="v" style="left:33px;top:541px;transform:rotate(180deg);font:10.5px/14px 'Liberation Sans',sans-serif;color:#223">50</div>
<div class="v" style="left:33px;top:617px;transform:rotate(180deg);font:10.5px/14px 'Liberation Sans',sans-serif;color:#223">0</div>

<!-- vertical scrollbar -->
<div class="b" style="left:771px;top:129px;width:17px;height:13px"></div>
<div class="d" style="left:775px;top:134px;border-left:4px solid transparent;border-right:4px solid transparent;border-bottom:4px solid #000"></div>
<div class="h" style="left:771px;top:142px;width:17px;height:120px"></div>
<div class="b" style="left:771px;top:262px;width:17px;height:284px;border-right:2px solid #555;border-bottom:2px solid #555"></div>
<div class="h" style="left:771px;top:546px;width:17px;height:102px"></div>
<div class="b" style="left:771px;top:648px;width:17px;height:14px"></div>
<div class="d" style="left:775px;top:653px;border-left:4px solid transparent;border-right:4px solid transparent;border-top:4px solid #000"></div>

<!-- horizontal scrollbar -->
<div class="b" style="left:421px;top:676px;width:16px;height:15px"></div>
<div class="d" style="left:426px;top:679px;border-top:4px solid transparent;border-bottom:4px solid transparent;border-right:4px solid #000"></div>
<div class="h" style="left:437px;top:676px;width:9px;height:15px"></div>
<div class="b" style="left:446px;top:676px;width:300px;height:15px;border-right:2px solid #555;border-bottom:2px solid #555"></div>
<div class="h" style="left:746px;top:676px;width:9px;height:15px"></div>
<div class="b" style="left:755px;top:676px;width:15px;height:15px"></div>
<div class="d" style="left:761px;top:679px;border-top:4px solid transparent;border-bottom:4px solid transparent;border-left:4px solid #000"></div>

<div class="t s" style="left:120px;top:677px;font-size:12px;color:#333">1 / 1</div>
<div class="t" style="left:233px;top:677px">页 <span class="s" style="font-size:12px;color:#1a1a6a">1</span></div>

<!-- docker text/controls -->
<div class="t" style="left:797px;top:115px">转换</div>
<div class="b" style="left:808px;top:140px;width:24px;height:24px;background:none"></div>
<div class="b" style="left:834px;top:140px;width:24px;height:24px;background:none"></div>
<div class="b" style="left:859px;top:140px;width:24px;height:24px;background:none"></div>
<div class="b" style="left:885px;top:140px;width:24px;height:24px;background:none"></div>
<div class="b" style="left:910px;top:140px;width:24px;height:24px;background:none;border-color:#808080 #fff #fff #808080"></div>
<div class="t" style="left:808px;top:182px">倾斜<span class="a">:</span></div>
<div class="t s" style="left:808px;top:211px;font-size:11.5px;color:#16164a">H:</div>
<div class="t" style="left:808px;top:239px">垂直<span class="a">:</span></div>
<div class="t" style="left:930px;top:212px">度</div>
<div class="t" style="left:930px;top:240px">度</div>

<div class="i" style="left:852px;top:207px;width:72px;height:23px;border:2px solid;border-color:#8a8780 #fff #fff #8a8780;padding-left:1px;line-height:15px;font-size:12.5px;color:#111">45.0</div>
<div class="b" style="left:906px;top:209px;width:16px;height:10px"></div><div class="d" style="left:910px;top:212px;border-left:4px solid transparent;border-right:4px solid transparent;border-bottom:4px solid #000"></div>
<div class="b" style="left:906px;top:219px;width:16px;height:9px"></div><div class="d" style="left:910px;top:222px;border-left:4px solid transparent;border-right:4px solid transparent;border-top:4px solid #000"></div>
<div class="i" style="left:852px;top:236px;width:72px;height:23px;border:2px solid;border-color:#8a8780 #fff #fff #8a8780;padding-left:1px;line-height:15px;font-size:12.5px">30.0</div>
<div class="b" style="left:906px;top:238px;width:16px;height:10px"></div><div class="d" style="left:910px;top:241px;border-left:4px solid transparent;border-right:4px solid transparent;border-bottom:4px solid #000"></div>
<div class="b" style="left:906px;top:248px;width:16px;height:9px"></div><div class="d" style="left:910px;top:251px;border-left:4px solid transparent;border-right:4px solid transparent;border-top:4px solid #000"></div>

<div class="d" style="left:810px;top:327px;width:13px;height:13px;background:#fff;border:1px solid #888;box-sizing:border-box"></div>
<div class="t" style="left:828px;top:327px">使用锚点</div>
<div class="t" style="left:808px;top:425px">副本<span class="a">:</span></div>
<div class="i" style="left:862px;top:421px;width:88px;height:23px;border:2px solid;border-color:#8a8780 #fff #fff #8a8780;padding-left:1px;line-height:15px;font-size:12.5px">0</div>
<div class="b" style="left:933px;top:423px;width:16px;height:10px"></div><div class="d" style="left:937px;top:426px;border-left:4px solid transparent;border-right:4px solid transparent;border-bottom:4px solid #000"></div>
<div class="b" style="left:933px;top:433px;width:16px;height:9px"></div><div class="d" style="left:937px;top:436px;border-left:4px solid transparent;border-right:4px solid transparent;border-top:4px solid #000"></div>
<div class="b" style="left:808px;top:449px;width:144px;height:23px;text-align:center;font:12px/21px 'WenQuanYi Zen Hei','Noto Sans CJK SC',sans-serif">应用</div>

<div class="v" style="left:983px;top:161px">对象管理器</div>
<div class="v" style="left:983px;top:243px">提示</div>
<div class="v" style="left:983px;top:293px">透镜</div>
<div class="v" style="left:983px;top:345px">对象属性</div>
<div class="v" style="left:983px;top:415px;font:10px/14px 'Liberation Mono',monospace">ConceptShare</div>
<div class="v" style="left:984px;top:515px;color:#111">转换</div>

<!-- status text -->
<div class="t s" style="left:5px;top:697px;font-size:11px">( 125.132, 182.281 )</div>
<div class="t s" style="left:385px;top:697px;font-size:11.5px">221 <span style="font:12px/14px 'WenQuanYi Zen Hei','Noto Sans CJK SC',sans-serif">对象群組 于 图层</span> 1</div>
<div class="t" style="left:5px;top:718px">文档颜色预置文件<span class="s n">: RGB: sRGB IEC61966-2.1; CMYK: Japan Color 2001 Coated; </span>灰度<span class="s n">: Dot Gain 15%</span></div>
<div class="t" style="left:857px;top:698px">填充色</div>
<div class="t" style="left:857px;top:719px">轮廓色</div>

<!-- taskbar text -->
<div class="t" style="left:22px;top:746px">开始</div>
<div class="t" style="left:167px;top:746px;font:10.5px/14px 'Liberation Mono',monospace">CorelDRAW X5 - [F:\...</div>

<!-- popup menu -->
<div id="m">
<div class="c"></div>
<svg width="191" height="430" viewBox="443 0 191 430" style="left:0;top:0">
<circle cx="454" cy="13" r="7" fill="none" stroke="#cfcdc7" stroke-width="1.5"/><path d="M454,5v3M454,18v3M446,13h3M459,13h3" stroke="#cfcdc7" stroke-width="2"/>
<rect x="446.5" y="28.5" width="14" height="13" fill="none" stroke="#555" stroke-dasharray="2 1"/><rect x="451" y="32" width="5" height="4" fill="#fff" stroke="#666" stroke-width=".6"/><path d="M456,38l5,4M461,38l-5,4" stroke="#e63c14" stroke-width="1.6"/>
<rect x="447.5" y="52.5" width="12" height="11" fill="#e6e4de" stroke="#cbc8c0"/><rect x="450.5" y="55" width="5" height="5" fill="#fff" stroke="#555"/><rect x="453" y="57.5" width="5" height="5" fill="#fff" stroke="#555"/><path d="M458,49l3,3M461,49l-3,3" stroke="#e63c14" stroke-width="1.5"/>
<path d="M447,72.5h14M447,84.5h14" stroke="#444"/><path d="M447,75h4M447,78h4M447,81h4" stroke="#556"/><rect x="452.5" y="74.5" width="8" height="8" fill="#d4d8ea" stroke="#557"/>
<rect x="444.5" y="91.5" width="19" height="19" fill="#d4d8e8" stroke="#0a246a"/><path d="M451,94h5v14h-5" fill="none" stroke="#556"/><rect x="451" y="97" width="6" height="6" fill="#e56a0a"/>
<path d="M453,122l-7,5.5l7,5.5v-3c4,0 6,2 6,6c2,-6 0,-10 -6,-10z" fill="#4d5260"/>
<path d="M447,146l13,10M460,146l-13,10" stroke="#55565e" stroke-width="1.4"/><circle cx="448" cy="147" r="2.5" fill="none" stroke="#55565e" stroke-width="1.4"/><circle cx="448" cy="156" r="2.5" fill="none" stroke="#55565e" stroke-width="1.4"/>
<rect x="447.5" y="168.5" width="8" height="10" fill="#e6ece6" stroke="#9ab0a8"/><rect x="452.5" y="171.5" width="8" height="10" fill="#fff" stroke="#556"/><path d="M454,175h5M454,177.5h5" stroke="#556"/>
<path d="M447,191.5h13M451,191v-2h5v2" fill="none" stroke="#556"/><rect x="448.5" y="192.5" width="10" height="11" fill="#f6f6f6" stroke="#556"/><path d="M451.5,195v6M455.5,195v6" stroke="#556"/>
<rect x="447.5" y="217" width="12" height="8" fill="#3e4a6e"/><path d="M450,217v-2.5a3.5,3.5 0 0 1 7,0v2.5" fill="none" stroke="#3e4a6e" stroke-width="1.6"/>
<rect x="444.5" y="383.5" width="19" height="19" fill="#d4d8e8" stroke="#0a246a"/><path d="M449,393l3,3l6,-6" fill="none" stroke="#2a9a3c" stroke-width="2"/>
</svg>
<div class="t g" style="top:6px">转换为曲线<span class="a"> (V)</span></div><div class="k g" style="top:6px">Ctrl+Q</div>
<div class="t" style="top:28px">取消群组<span class="a"> (U)</span></div><div class="k" style="top:28px">Ctrl+U</div>
<div class="t" style="top:50px">取消全部群组<span class="a"> (N)</span></div>
<div class="t" style="top:72px">段落文本换行<span class="a"> (W)</span></div>
<div class="t" style="top:94px">连线换行</div>
<div class="l" style="top:115px"></div>
<div class="t" style="top:123px">撤消组合<span class="a"> (U)</span></div><div class="k" style="top:123px">Ctrl+Z</div>
<div class="t" style="top:145px">剪切<span class="a"> (T)</span></div><div class="k" style="top:145px">Ctrl+X</div>
<div class="t" style="top:167px">复制<span class="a"> (C)</span></div><div class="k" style="top:167px">Ctrl+C</div>
<div class="t" style="top:189px">删除<span class="a"> (L)</span></div><div class="t" style="left:145px;top:189px">删除</div>
<div class="t" style="top:211px">锁定对象<span class="a"> (L)</span></div>
<div class="l" style="top:232px"></div>
<div class="t" style="top:240px">顺序<span class="a"> (O)</span></div><div class="r" style="top:243px"></div>
<div class="t" style="top:262px">样式<span class="a"> (S)</span></div><div class="r" style="top:265px"></div>
<div class="t" style="top:284px">因特网链接<span class="a"> (N)</span></div><div class="r" style="top:287px"></div>
<div class="l" style="top:305px"></div>
<div class="t" style="top:313px">叠印填充<span class="a"> (F)</span></div>
<div class="t" style="top:335px">叠印轮廓<span class="a"> (O)</span></div>
<div class="t" style="top:357px">对象提示<span class="a"> (H)</span></div>
<div class="l" style="top:378px"></div>
<div class="t" style="top:386px">属性<span class="a"> (I)</span></div><div class="k" style="left:116px;top:386px">Alt+Enter</div>
<div class="t" style="top:408px">符号<span class="a"> (Y)</span></div><div class="r" style="top:411px"></div>
</div>
</div></body></html>
